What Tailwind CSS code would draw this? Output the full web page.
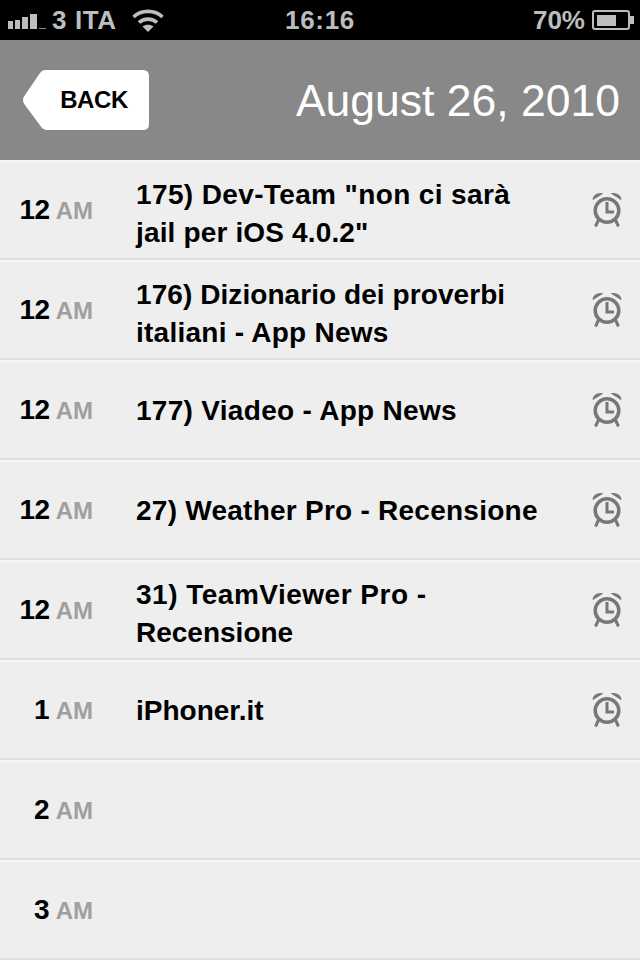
<!DOCTYPE html>
<html lang="en">
<head>
    <meta charset="UTF-8">
    <script src="https://cdn.jsdelivr.net/npm/@tailwindcss/browser@4"></script>
    <title>Calendar</title>
</head>
<body class="bg-[#eeeeee] font-['Liberation_Sans',sans-serif]">
    <div class="w-[640px] h-[960px] overflow-hidden flex flex-col">
        <!-- status bar -->
        <div class="h-10 bg-black flex items-center justify-between text-[#bdbdbd] text-[26px] font-bold relative shrink-0">
            <div class="flex items-center pl-2">
                <svg width="38" height="16" viewBox="0 0 38 16" class="mt-[1px]">
                    <rect x="0" y="8" width="5" height="8" fill="#bdbdbd"/>
                    <rect x="7" y="7" width="5" height="9" fill="#bdbdbd"/>
                    <rect x="14" y="4" width="6" height="12" fill="#bdbdbd"/>
                    <rect x="22" y="1" width="7" height="15" fill="#bdbdbd"/>
                    <rect x="31" y="15" width="7" height="1" fill="#8a8a8a"/>
                </svg>
                <span class="ml-[6px] text-[26px] tracking-[0.6px] whitespace-pre">3 ITA</span>
                <svg width="32" height="24" viewBox="0 0 32 24" class="ml-[15px]">
                    <path d="M1.500 9 C9 1.500 23 1.500 30.500 9" fill="none" stroke="#bdbdbd" stroke-width="3.600"/>
                    <path d="M7 14.500 C12 10 20 10 25 14.500" fill="none" stroke="#bdbdbd" stroke-width="3.600"/>
                    <path d="M10.500 18.500 C13.500 16 18.500 16 21.500 18.500 L16 24 Z" fill="#bdbdbd"/>
                </svg>
            </div>
            <span class="absolute left-[285px] top-[4px] leading-[32px] tracking-[0.7px]">16:16</span>
            <div class="flex items-center pr-[6px]">
                <span class="text-[26px]">70%</span>
                <svg width="42" height="20" viewBox="0 0 42 20" class="ml-[7px]">
                    <rect x="1" y="1" width="36" height="18" rx="2" fill="none" stroke="#bdbdbd" stroke-width="2"/>
                    <rect x="5" y="5" width="19" height="11" fill="#bdbdbd"/>
                    <path d="M38 6 H42 V14 H38 Z" fill="#bdbdbd"/>
                </svg>
            </div>
        </div>

        <!-- header -->
        <div class="h-[120px] bg-[#888888] flex items-center justify-between pl-[23px] pr-[20px] shrink-0">
            <button class="relative w-[126px] h-[60px] flex items-center justify-center pl-[16px] text-[24px] font-bold text-black tracking-[-0.4px]">
                <svg width="126" height="60" viewBox="0 0 126 60" class="absolute left-0 top-0">
                    <path d="M22 0 H120 Q126 0 126 6 V54 Q126 60 120 60 H24 Q21 60 19 58 L2 35 Q-2 30 2 25 L17 3 Q19 0 22 0 Z" fill="#ffffff"/>
                </svg>
                <span class="relative">BACK</span>
            </button>
            <h1 class="text-white text-[44.500px] font-normal pt-[3px]">August 26, 2010</h1>
        </div>

        <!-- hour rows -->
        <div class="flex flex-col">
            <div class="h-[100px] flex items-center border-t-2 border-t-[#f5f5f5] border-b-2 border-b-[#dedede] pr-[16px] shrink-0">
                <div class="w-[136px] flex items-baseline justify-end pr-[43px] font-bold"><span class="text-[28px] text-black tracking-[-0.5px]">12</span><span class="text-[24px] text-[#a0a0a0] ml-[6px]">AM</span></div>
                <div class="flex-1 text-[28px] leading-[38px] font-bold text-black pt-[7px]"><span class="tracking-[0.37px]">175) Dev-Team "non ci sarà</span><br><span class="tracking-[0.15px]">jail per iOS 4.0.2"</span></div>
                <svg width="32" height="38" viewBox="0 0 32 38" fill="none" stroke="#777777"><circle cx="15" cy="19.500" r="11.800" stroke-width="3.500"/><path d="M15 11 V21 H22" stroke-width="3"/><path d="M6.500 29 L3.500 35.500 M23.500 29 L26.500 35.500" stroke-width="3"/><path d="M1 8.500 Q1.500 2 10.500 2.500 Z M29 8.500 Q28.500 2 19.500 2.500 Z" fill="#777777" stroke-width="1"/></svg>
            </div>
            <div class="h-[100px] flex items-center border-t-2 border-t-[#f5f5f5] border-b-2 border-b-[#dedede] pr-[16px] shrink-0">
                <div class="w-[136px] flex items-baseline justify-end pr-[43px] font-bold"><span class="text-[28px] text-black tracking-[-0.5px]">12</span><span class="text-[24px] text-[#a0a0a0] ml-[6px]">AM</span></div>
                <div class="flex-1 text-[28px] leading-[38px] font-bold text-black pt-[7px]"><span class="tracking-[0.07px]">176) Dizionario dei proverbi</span><br><span class="tracking-[0.25px]">italiani - App News</span></div>
                <svg width="32" height="38" viewBox="0 0 32 38" fill="none" stroke="#777777"><circle cx="15" cy="19.500" r="11.800" stroke-width="3.500"/><path d="M15 11 V21 H22" stroke-width="3"/><path d="M6.500 29 L3.500 35.500 M23.500 29 L26.500 35.500" stroke-width="3"/><path d="M1 8.500 Q1.500 2 10.500 2.500 Z M29 8.500 Q28.500 2 19.500 2.500 Z" fill="#777777" stroke-width="1"/></svg>
            </div>
            <div class="h-[100px] flex items-center border-t-2 border-t-[#f5f5f5] border-b-2 border-b-[#dedede] pr-[16px] shrink-0">
                <div class="w-[136px] flex items-baseline justify-end pr-[43px] font-bold"><span class="text-[28px] text-black tracking-[-0.5px]">12</span><span class="text-[24px] text-[#a0a0a0] ml-[6px]">AM</span></div>
                <div class="flex-1 text-[28px] leading-[38px] font-bold text-black tracking-[0.3px] pt-[2px]">177) Viadeo - App News</div>
                <svg width="32" height="38" viewBox="0 0 32 38" fill="none" stroke="#777777"><circle cx="15" cy="19.500" r="11.800" stroke-width="3.500"/><path d="M15 11 V21 H22" stroke-width="3"/><path d="M6.500 29 L3.500 35.500 M23.500 29 L26.500 35.500" stroke-width="3"/><path d="M1 8.500 Q1.500 2 10.500 2.500 Z M29 8.500 Q28.500 2 19.500 2.500 Z" fill="#777777" stroke-width="1"/></svg>
            </div>
            <div class="h-[100px] flex items-center border-t-2 border-t-[#f5f5f5] border-b-2 border-b-[#dedede] pr-[16px] shrink-0">
                <div class="w-[136px] flex items-baseline justify-end pr-[43px] font-bold"><span class="text-[28px] text-black tracking-[-0.5px]">12</span><span class="text-[24px] text-[#a0a0a0] ml-[6px]">AM</span></div>
                <div class="flex-1 text-[28px] leading-[38px] font-bold text-black tracking-[0.25px] pt-[2px]">27) Weather Pro - Recensione</div>
                <svg width="32" height="38" viewBox="0 0 32 38" fill="none" stroke="#777777"><circle cx="15" cy="19.500" r="11.800" stroke-width="3.500"/><path d="M15 11 V21 H22" stroke-width="3"/><path d="M6.500 29 L3.500 35.500 M23.500 29 L26.500 35.500" stroke-width="3"/><path d="M1 8.500 Q1.500 2 10.500 2.500 Z M29 8.500 Q28.500 2 19.500 2.500 Z" fill="#777777" stroke-width="1"/></svg>
            </div>
            <div class="h-[100px] flex items-center border-t-2 border-t-[#f5f5f5] border-b-2 border-b-[#dedede] pr-[16px] shrink-0">
                <div class="w-[136px] flex items-baseline justify-end pr-[43px] font-bold"><span class="text-[28px] text-black tracking-[-0.5px]">12</span><span class="text-[24px] text-[#a0a0a0] ml-[6px]">AM</span></div>
                <div class="flex-1 text-[28px] leading-[38px] font-bold text-black pt-[7px]"><span class="tracking-[0.5px]">31) TeamViewer Pro -</span><br>Recensione</div>
                <svg width="32" height="38" viewBox="0 0 32 38" fill="none" stroke="#777777"><circle cx="15" cy="19.500" r="11.800" stroke-width="3.500"/><path d="M15 11 V21 H22" stroke-width="3"/><path d="M6.500 29 L3.500 35.500 M23.500 29 L26.500 35.500" stroke-width="3"/><path d="M1 8.500 Q1.500 2 10.500 2.500 Z M29 8.500 Q28.500 2 19.500 2.500 Z" fill="#777777" stroke-width="1"/></svg>
            </div>
            <div class="h-[100px] flex items-center border-t-2 border-t-[#f5f5f5] border-b-2 border-b-[#dedede] pr-[16px] shrink-0">
                <div class="w-[136px] flex items-baseline justify-end pr-[43px] font-bold"><span class="text-[28px] text-black">1</span><span class="text-[24px] text-[#a0a0a0] ml-[6px]">AM</span></div>
                <div class="flex-1 text-[28px] leading-[38px] font-bold text-black pt-[2px]">iPhoner.it</div>
                <svg width="32" height="38" viewBox="0 0 32 38" fill="none" stroke="#777777"><circle cx="15" cy="19.500" r="11.800" stroke-width="3.500"/><path d="M15 11 V21 H22" stroke-width="3"/><path d="M6.500 29 L3.500 35.500 M23.500 29 L26.500 35.500" stroke-width="3"/><path d="M1 8.500 Q1.500 2 10.500 2.500 Z M29 8.500 Q28.500 2 19.500 2.500 Z" fill="#777777" stroke-width="1"/></svg>
            </div>
            <div class="h-[100px] flex items-center border-t-2 border-t-[#f5f5f5] border-b-2 border-b-[#dedede] shrink-0">
                <div class="w-[136px] flex items-baseline justify-end pr-[43px] font-bold"><span class="text-[28px] text-black">2</span><span class="text-[24px] text-[#a0a0a0] ml-[6px]">AM</span></div>
            </div>
            <div class="h-[100px] flex items-center border-t-2 border-t-[#f5f5f5] border-b-2 border-b-[#dedede] shrink-0">
                <div class="w-[136px] flex items-baseline justify-end pr-[43px] font-bold"><span class="text-[28px] text-black">3</span><span class="text-[24px] text-[#a0a0a0] ml-[6px]">AM</span></div>
            </div>
        </div>
    </div>
</body>
</html>
